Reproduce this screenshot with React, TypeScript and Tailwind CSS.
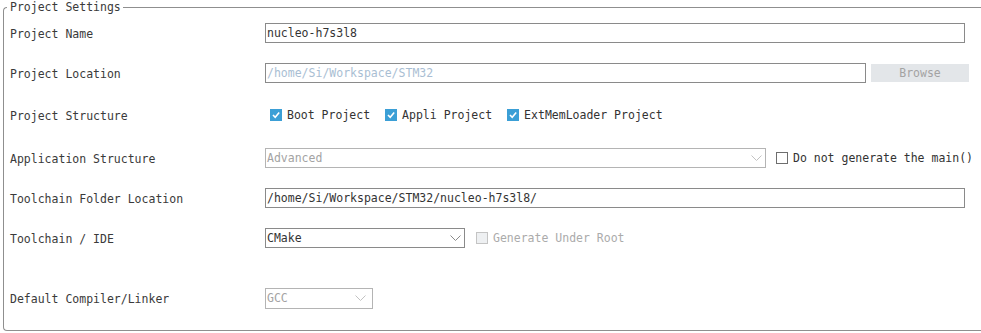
import React from 'react';

// Shared font for the whole dialog
const MONO = { fontFamily: '"DejaVu Sans Mono", "Liberation Mono", monospace' };

function Chevron({ color = '#9a9a9a' }: { color?: string }) {
  return (
    <svg width="11" height="6" viewBox="0 0 11 6" className="shrink-0">
      <polyline points="0.5,0.5 5.5,5.5 10.5,0.5" fill="none" stroke={color} strokeWidth="1" />
    </svg>
  );
}

function Check({ checked, disabled }: { checked?: boolean; disabled?: boolean }) {
  if (checked) {
    return (
      <span className="w-[12px] h-[12px] bg-[#3b9fd6] flex items-center justify-center shrink-0">
        <svg width="10" height="10" viewBox="0 0 10 10">
          <polyline points="2,5 4.2,7.3 8.2,2.6" fill="none" stroke="#ffffff" strokeWidth="1.6" />
        </svg>
      </span>
    );
  }
  return (
    <span
      className={`block w-[12px] h-[12px] border shrink-0 ${
        disabled ? 'border-[#c4c4c4] bg-[#eef0f2]' : 'border-[#6e6e6e] bg-white'
      }`}
    />
  );
}

function Row({ label, className = '', children }: { label: string; className?: string; children: React.ReactNode }) {
  return (
    <div className={`flex items-center h-[20px] ${className}`}>
      <div className="w-[255px] shrink-0 pt-[1px] text-[#3a3a3a] whitespace-nowrap">{label}</div>
      {children}
    </div>
  );
}

export default function App() {
  return (
    <div className="w-full h-[333px] bg-white overflow-hidden text-[11.5px] leading-[14px]" style={MONO}>
      <fieldset className="ml-[3px] border-t border-l border-b border-[#8f8f8f] rounded-bl-[4px] rounded-tl-[4px] pl-[6px] pb-[22px]">
        <legend className="ml-[-3px] pl-[3px] pr-[2px] text-[#3a3a3a]">Project Settings</legend>

        {/* === PROJECT NAME === */}
        <Row label="Project Name" className="mt-[9px]">
          <div className="w-[700px] h-[20px] border border-[#8a8a8a] pl-[1px] flex items-center text-[#333]">
            nucleo-h7s3l8
          </div>
        </Row>

        {/* === PROJECT LOCATION === */}
        <Row label="Project Location" className="mt-[20px]">
          <div className="w-[601px] h-[20px] border border-[#8a8a8a] pl-[1px] flex items-center text-[#a9bed3]">
            /home/Si/Workspace/STM32
          </div>
          <div className="ml-[5px] w-[98px] h-[18px] bg-[#e3e6e9] flex items-center justify-center text-[#a3a3a3]">
            Browse
          </div>
        </Row>

        {/* === PROJECT STRUCTURE === */}
        <Row label="Project Structure" className="mt-[22px]">
          <div className="flex items-center pl-[5px] text-[#333]">
            <Check checked />
            <span className="ml-[5px]">Boot Project</span>
            <span className="ml-[15px] flex"><Check checked /></span>
            <span className="ml-[5px]">Appli Project</span>
            <span className="ml-[15px] flex"><Check checked /></span>
            <span className="ml-[5px]">ExtMemLoader Project</span>
          </div>
        </Row>

        {/* === APPLICATION STRUCTURE === */}
        <Row label="Application Structure" className="mt-[23px]">
          <div className="w-[501px] h-[20px] border border-[#b4b4b4] pl-[1px] pr-[3px] flex items-center justify-between text-[#a3a3a3]">
            <span>Advanced</span>
            <Chevron color="#c2c2c2" />
          </div>
          <span className="ml-[10px] flex"><Check /></span>
          <span className="ml-[5px] text-[#333] whitespace-nowrap">Do not generate the main()</span>
        </Row>

        {/* === TOOLCHAIN FOLDER === */}
        <Row label="Toolchain Folder Location" className="mt-[20px]">
          <div className="w-[700px] h-[20px] border border-[#8a8a8a] pl-[1px] flex items-center text-[#333]">
            /home/Si/Workspace/STM32/nucleo-h7s3l8/
          </div>
        </Row>

        {/* === TOOLCHAIN / IDE === */}
        <Row label="Toolchain / IDE" className="mt-[20px]">
          <div className="w-[200px] h-[20px] border border-[#8a8a8a] pl-[1px] pr-[3px] flex items-center justify-between text-[#333]">
            <span>CMake</span>
            <Chevron color="#8a8a8a" />
          </div>
          <span className="ml-[11px] flex"><Check disabled /></span>
          <span className="ml-[5px] text-[#ababab] whitespace-nowrap">Generate Under Root</span>
        </Row>

        {/* === COMPILER === */}
        <Row label="Default Compiler/Linker" className="mt-[40px]">
          <div className="w-[108px] h-[21px] border border-[#b4b4b4] pl-[1px] pr-[6px] flex items-center justify-between text-[#a3a3a3]">
            <span>GCC</span>
            <Chevron color="#c2c2c2" />
          </div>
        </Row>
      </fieldset>
    </div>
  );
}
